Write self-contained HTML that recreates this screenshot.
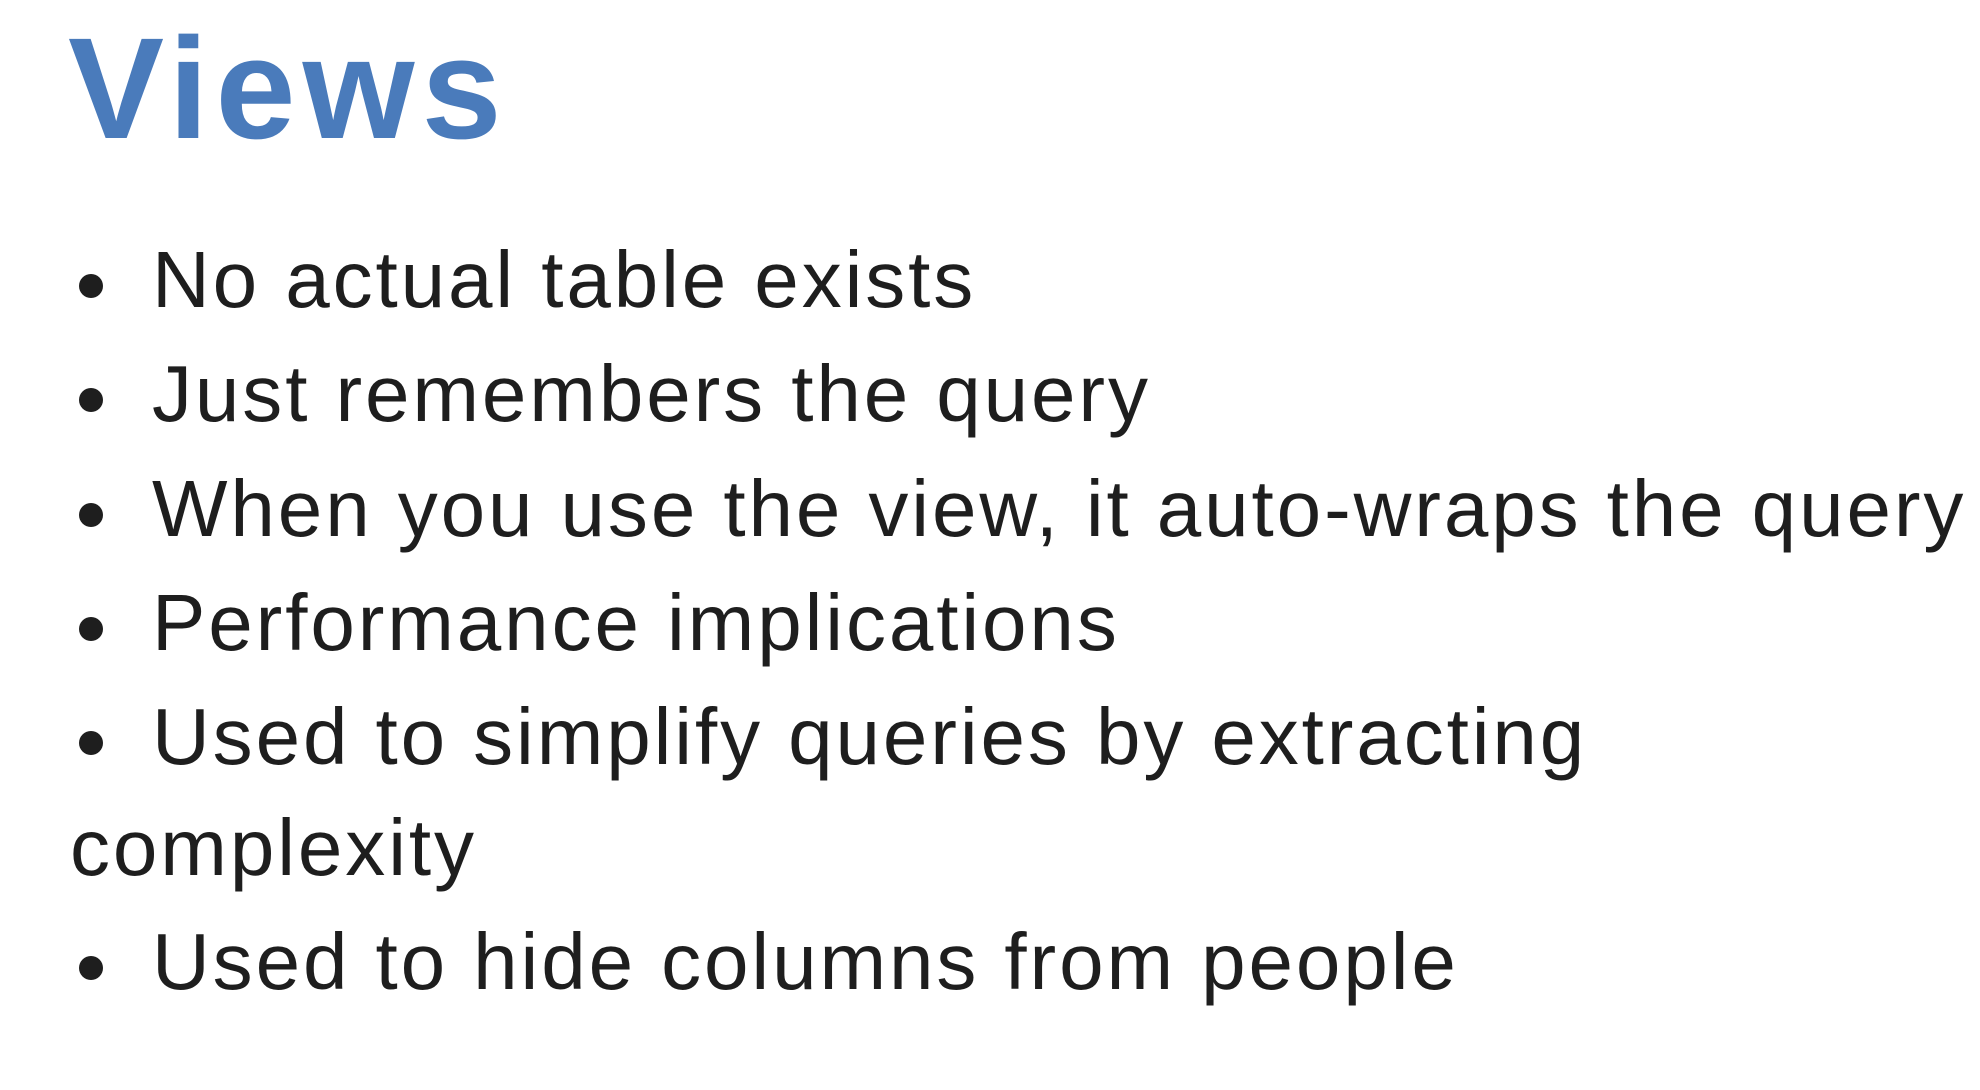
<!DOCTYPE html>
<html><head><meta charset="utf-8"><style>
html,body{margin:0;padding:0;background:#fff;width:1980px;height:1090px;overflow:hidden;}
.t{position:absolute;white-space:nowrap;font-family:"Liberation Sans",sans-serif;line-height:1.15;}
.h{font-size:144px;font-weight:bold;color:#4a7bbb;left:68px;top:6px;letter-spacing:7px;}
.l{font-size:80px;color:#1e1e1e;left:152px;letter-spacing:2.9px;}
.b{position:absolute;width:24px;height:24px;border-radius:50%;background:#1e1e1e;left:79px;}
</style></head><body>
<div class="t h">Views</div>
<div class="b" style="top:274px"></div><div class="t l" style="top:234px">No actual table exists</div>
<div class="b" style="top:388px"></div><div class="t l" style="top:348px">Just remembers the query</div>
<div class="b" style="top:503px"></div><div class="t l" style="top:463px">When you use the view, it auto-wraps the query</div>
<div class="b" style="top:617px"></div><div class="t l" style="top:577px">Performance implications</div>
<div class="b" style="top:731px"></div><div class="t l" style="top:691px">Used to simplify queries by extracting</div>
<div class="t l" style="top:802px;left:70px">complexity</div>
<div class="b" style="top:956px"></div><div class="t l" style="top:916px">Used to hide columns from people</div>
</body></html>
